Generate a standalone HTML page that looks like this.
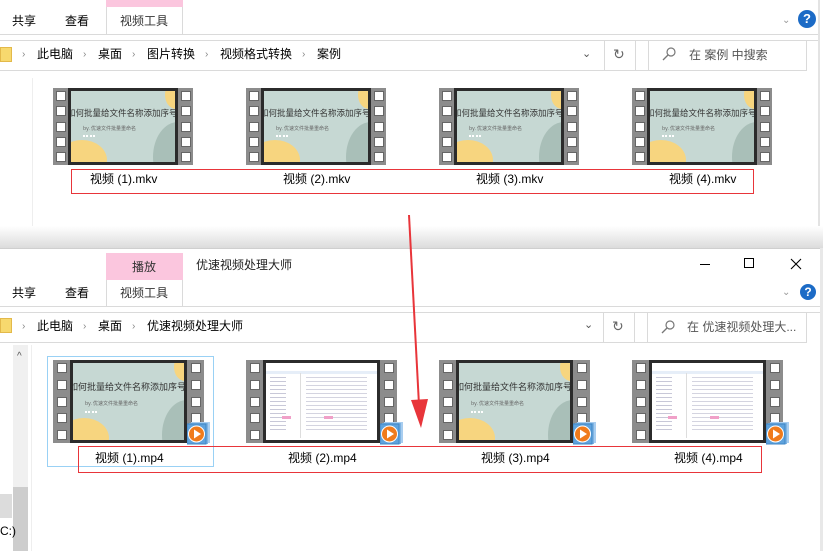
<!DOCTYPE html>
<html><head><meta charset="utf-8"><style>
*{margin:0;padding:0;box-sizing:border-box}
body{width:823px;height:551px;overflow:hidden;background:#fff;position:relative;font-family:"Liberation Sans","Noto Sans CJK SC",sans-serif;font-size:12px;color:#000}
.a{position:absolute}
.t{position:absolute;white-space:nowrap;font-size:12px;line-height:14px}
.hl{position:absolute;height:1px;background:#dadada}
.film{position:absolute;background:#8c8c8c}
.film .sq{position:absolute;background:#fff;border:1px solid #666}
.film .in{position:absolute;top:0;bottom:0;background:#2b2b2b}
.slide{position:absolute;background:#c6d8d3;overflow:hidden}
.slide .ttl{position:absolute;left:-4px;white-space:nowrap;color:#333;font-family:"Noto Sans CJK SC",sans-serif}
.blobY{position:absolute;background:#f7d57f;border-radius:50%}
.blobG{position:absolute;background:#a9bfb8;border-radius:50%}
.shot{position:absolute;background:#fff;overflow:hidden}
.ln{position:absolute;height:1px;background:#c8c8d8}
.play{position:absolute;width:24px;height:24px}
</style></head><body>

<!-- TOP WINDOW -->
<div class="a" style="left:106px;top:0;width:77px;height:7px;background:#fbc6de"></div>
<div class="a" style="left:106px;top:7px;width:77px;height:27px;border-left:1px solid #dadada;border-right:1px solid #dadada"></div>
<div class="t" style="left:12px;top:14px">共享</div>
<div class="t" style="left:65px;top:14px">查看</div>
<div class="t" style="left:120px;top:14px;color:#333">视频工具</div>
<div class="t" style="left:782px;top:14px;color:#999;font-size:10px">&#8964;</div>
<div class="a" style="left:798px;top:10px;width:18px;height:18px;border-radius:50%;background:#1c6bc6;color:#fff;font-weight:bold;font-size:13px;text-align:center;line-height:18px">?</div>
<div class="hl" style="left:0;top:34px;width:820px"></div>
<div class="hl" style="left:0;top:40px;width:820px"></div>
<div class="a" style="left:0;top:47px;width:12px;height:15px;background:#f7d96e;border:1px solid #e3b94a"></div>
<div class="t" style="left:22px;top:48px;color:#888;font-size:10px">›</div>
<div class="t" style="left:37px;top:47px">此电脑</div>
<div class="t" style="left:83px;top:48px;color:#888;font-size:10px">›</div>
<div class="t" style="left:98px;top:47px">桌面</div>
<div class="t" style="left:132px;top:48px;color:#888;font-size:10px">›</div>
<div class="t" style="left:147px;top:47px">图片转换</div>
<div class="t" style="left:205px;top:48px;color:#888;font-size:10px">›</div>
<div class="t" style="left:220px;top:47px">视频格式转换</div>
<div class="t" style="left:302px;top:48px;color:#888;font-size:10px">›</div>
<div class="t" style="left:317px;top:47px">案例</div>
<div class="t" style="left:582px;top:47px;color:#555;font-size:11px">&#8964;</div>
<div class="a" style="left:604px;top:40px;width:1px;height:30px;background:#dadada"></div>
<div class="a" style="left:635px;top:40px;width:1px;height:30px;background:#dadada"></div>
<div class="t" style="left:613px;top:47px;color:#666;font-size:14px">↻</div>
<div class="a" style="left:648px;top:40px;width:159px;height:31px;border:1px solid #dadada"></div>
<svg class="a" style="left:662px;top:47px" width="14" height="14"><circle cx="9" cy="5" r="4" fill="none" stroke="#777" stroke-width="1.2"/><line x1="6" y1="8" x2="1" y2="13" stroke="#777" stroke-width="1.3"/></svg>
<div class="t" style="left:689px;top:48px;color:#555">在 案例 中搜索</div>
<div class="hl" style="left:0;top:70px;width:648px"></div>
<div class="a" style="left:32px;top:78px;width:1px;height:160px;background:#eee"></div>
<div class="a" style="left:818px;top:0;width:2px;height:240px;background:#e3e3e3"></div>

<div id="topthumbs"></div>
<div class="a" style="left:71px;top:169px;width:683px;height:25px;border:1px solid #e8353a"></div>
<div class="t" style="left:90px;top:172px">视频 (1).mkv</div>
<div class="t" style="left:283px;top:172px">视频 (2).mkv</div>
<div class="t" style="left:476px;top:172px">视频 (3).mkv</div>
<div class="t" style="left:669px;top:172px">视频 (4).mkv</div>

<div class="a" style="left:0;top:226px;width:823px;height:22px;background:linear-gradient(#fff,#dcdcdc)"></div>

<!-- BOTTOM WINDOW -->
<div class="a" style="left:0;top:248px;width:823px;height:303px;background:#fff;border-top:1px solid #cfcfcf"></div>
<div class="a" style="left:106px;top:253px;width:77px;height:27px;background:#fbc6de"></div>
<div class="t" style="left:132px;top:260px;color:#333">播放</div>
<div class="t" style="left:196px;top:258px;color:#222">优速视频处理大师</div>
<div class="a" style="left:700px;top:264px;width:10px;height:1px;background:#000"></div>
<div class="a" style="left:744px;top:258px;width:10px;height:10px;border:1px solid #000"></div>
<svg class="a" style="left:790px;top:258px" width="12" height="12"><path d="M1 1L11 11M11 1L1 11" stroke="#000" stroke-width="1.1"/></svg>
<div class="a" style="left:106px;top:280px;width:77px;height:26px;border-left:1px solid #dadada;border-right:1px solid #dadada"></div>
<div class="t" style="left:12px;top:286px">共享</div>
<div class="t" style="left:65px;top:286px">查看</div>
<div class="t" style="left:120px;top:286px;color:#333">视频工具</div>
<div class="t" style="left:782px;top:286px;color:#999;font-size:10px">&#8964;</div>
<div class="a" style="left:800px;top:284px;width:16px;height:16px;border-radius:50%;background:#1c6bc6;color:#fff;font-weight:bold;font-size:12px;text-align:center;line-height:16px">?</div>
<div class="hl" style="left:0;top:306px;width:823px"></div>
<div class="hl" style="left:0;top:312px;width:823px"></div>
<div class="a" style="left:0;top:318px;width:12px;height:15px;background:#f7d96e;border:1px solid #e3b94a"></div>
<div class="t" style="left:22px;top:320px;color:#888;font-size:10px">›</div>
<div class="t" style="left:37px;top:319px">此电脑</div>
<div class="t" style="left:83px;top:320px;color:#888;font-size:10px">›</div>
<div class="t" style="left:98px;top:319px">桌面</div>
<div class="t" style="left:132px;top:320px;color:#888;font-size:10px">›</div>
<div class="t" style="left:147px;top:319px">优速视频处理大师</div>
<div class="t" style="left:584px;top:318px;color:#555;font-size:11px">&#8964;</div>
<div class="a" style="left:603px;top:312px;width:1px;height:30px;background:#dadada"></div>
<div class="a" style="left:634px;top:312px;width:1px;height:30px;background:#dadada"></div>
<div class="t" style="left:612px;top:319px;color:#666;font-size:14px">↻</div>
<div class="a" style="left:647px;top:312px;width:160px;height:31px;border:1px solid #dadada"></div>
<svg class="a" style="left:661px;top:320px" width="14" height="14"><circle cx="9" cy="5" r="4" fill="none" stroke="#777" stroke-width="1.2"/><line x1="6" y1="8" x2="1" y2="13" stroke="#777" stroke-width="1.3"/></svg>
<div class="t" style="left:687px;top:320px;color:#555">在 优速视频处理大...</div>
<div class="hl" style="left:0;top:342px;width:647px"></div>
<div class="a" style="left:13px;top:345px;width:15px;height:206px;background:#f0f0f0"></div>
<div class="a" style="left:13px;top:487px;width:15px;height:64px;background:#cdcdcd"></div>
<div class="t" style="left:17px;top:350px;color:#555;font-size:10px">^</div>
<div class="a" style="left:0;top:494px;width:12px;height:24px;background:#dcdcdc"></div>
<div class="t" style="left:0;top:524px">C:)</div>
<div class="a" style="left:31px;top:345px;width:1px;height:206px;background:#eee"></div>
<div class="a" style="left:820px;top:248px;width:3px;height:303px;background:#e8e8e8"></div>

<div class="a" style="left:47px;top:356px;width:167px;height:111px;border:1px solid #99d1f5"></div>
<div id="botthumbs"></div>
<div class="a" style="left:78px;top:446px;width:684px;height:27px;border:1px solid #e8353a"></div>
<div class="t" style="left:95px;top:451px">视频 (1).mp4</div>
<div class="t" style="left:288px;top:451px">视频 (2).mp4</div>
<div class="t" style="left:481px;top:451px">视频 (3).mp4</div>
<div class="t" style="left:674px;top:451px">视频 (4).mp4</div>

<!-- arrow -->
<svg class="a" style="left:0;top:0" width="823" height="551"><line x1="409" y1="215" x2="419" y2="405" stroke="#e8353a" stroke-width="2"/><polygon points="411,400 428,399 421,428" fill="#e8353a"/></svg>

<script>
function film(x,y,w,h,strip,kind,play){
 var s='<div class="film" style="left:'+x+'px;top:'+y+'px;width:'+w+'px;height:'+h+'px">';
 var n=5,gap=h/n;
 for(var i=0;i<n;i++){var sy=Math.round(gap*i+(gap-10)/2);
  s+='<div class="sq" style="left:'+Math.round((strip-10)/2)+'px;top:'+sy+'px;width:10px;height:10px"></div>';
  s+='<div class="sq" style="left:'+(w-strip+Math.round((strip-10)/2))+'px;top:'+sy+'px;width:10px;height:10px"></div>';}
 var iw=w-2*strip;
 s+='<div class="in" style="left:'+strip+'px;width:'+iw+'px"></div>';
 var cx=strip+3,cy=3,cw=iw-6,ch=h-6;
 if(kind=='slide'){
  s+='<div class="slide" style="left:'+cx+'px;top:'+cy+'px;width:'+cw+'px;height:'+ch+'px">'+
  '<div class="blobY" style="left:-14px;top:'+(ch-22)+'px;width:50px;height:40px"></div>'+
  '<div class="blobY" style="left:'+(cw-10)+'px;top:-10px;width:22px;height:28px"></div>'+
  '<div class="blobG" style="left:'+(cw-22)+'px;top:'+(ch-40)+'px;width:50px;height:70px"></div>'+
  '<div class="ttl" style="top:'+Math.round(ch*0.22)+'px;font-size:'+(cw>105?9:8.5)+'px">如何批量给文件名称添加序号</div>'+
  '<div class="ttl" style="left:12px;top:'+Math.round(ch*0.48)+'px;font-size:5px;color:#666">by. 优速文件批量重命名</div>'+
  '<div class="a" style="left:12px;top:'+Math.round(ch*0.62)+'px;width:12px;height:2px;border-top:2px dotted #fff"></div></div>';
 }else{
  var t='<div class="shot" style="left:'+cx+'px;top:'+cy+'px;width:'+cw+'px;height:'+ch+'px">';
  t+='<div class="a" style="left:0;top:8px;width:'+cw+'px;height:3px;background:#e6eef8"></div>';
  t+='<div class="a" style="left:34px;top:10px;width:1px;height:'+(ch-12)+'px;background:#ddd"></div>';
  for(var j=0;j<14;j++){t+='<div class="ln" style="left:4px;top:'+(14+j*4)+'px;width:16px"></div><div class="ln" style="left:40px;top:'+(14+j*4)+'px;width:'+(cw-50)+'px;background:#d4d4e0"></div>';}
  t+='<div class="a" style="left:16px;top:'+(ch-24)+'px;width:9px;height:3px;background:#f0a0c8"></div><div class="a" style="left:58px;top:'+(ch-24)+'px;width:9px;height:3px;background:#f0a0c8"></div>';
  s+=t+'</div>';
 }
 s+='</div>';
 if(play){s+='<svg class="play" style="left:'+(x+w-17)+'px;top:'+(y+h-22)+'px" viewBox="0 0 24 24"><rect x="4" y="1" width="19" height="21" fill="#a8cdef"/><rect x="2" y="2" width="19" height="21" fill="#7fb4e3"/><rect x="0" y="3" width="19" height="20" fill="#5ea2dc" stroke="#3d86c6" stroke-width="1"/><circle cx="9.5" cy="13" r="8" fill="#f07b1c" stroke="#fff" stroke-width="1"/><polygon points="7,8.5 14,13 7,17.5" fill="#fff"/></svg>';}
 return s;
}
var h='';[53,246,439,632].forEach(function(x){h+=film(x,88,140,77,15,'slide',false)});
document.getElementById('topthumbs').outerHTML=h;
var b='';var kinds=['slide','shot','slide','shot'];
[53,246,439,632].forEach(function(x,i){b+=film(x,360,151,83,17,kinds[i],true)});
document.getElementById('botthumbs').outerHTML=b;
</script>
</body></html>
